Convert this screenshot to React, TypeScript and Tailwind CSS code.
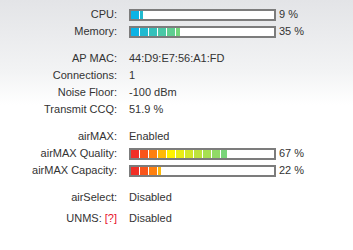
import React from "react";

type Stop = [number, string];

const BAR_INNER = 143;

const hexToRgb = (h: string) => [
  parseInt(h.slice(1, 3), 16),
  parseInt(h.slice(3, 5), 16),
  parseInt(h.slice(5, 7), 16),
];

const colorAt = (stops: Stop[], t: number) => {
  for (let i = 0; i < stops.length - 1; i++) {
    const [a, ca] = stops[i];
    const [b, cb] = stops[i + 1];
    if (t <= b || i === stops.length - 2) {
      const k = Math.max(0, Math.min(1, (t - a) / (b - a)));
      const x = hexToRgb(ca);
      const y = hexToRgb(cb);
      const c = x.map((v, j) => Math.round(v + (y[j] - v) * k));
      return `rgb(${c[0]},${c[1]},${c[2]})`;
    }
  }
  return stops[0][1];
};

const blueStops: Stop[] = [
  [0, "#02b0ee"],
  [0.35, "#76d67a"],
  [1, "#d8ec30"],
];

const heatStops: Stop[] = [
  [0, "#ee1c2c"],
  [0.14, "#ff7410"],
  [0.28, "#fff200"],
  [0.67, "#76d47e"],
  [1, "#40c090"],
];

const Bar = ({ fill, stops, pct }: { fill: number; stops: Stop[]; pct: string }) => {
  const segs = [];
  for (let x = 0; x < fill; x += 9) {
    const w = Math.min(8, fill - x);
    segs.push(
      <div
        key={x}
        className="h-full shrink-0"
        style={{ width: w, background: colorAt(stops, (x + 4) / BAR_INNER) }}
      />
    );
  }
  return (
    <div className="flex items-center">
      <div className="w-[147px] h-[12px] border-2 border-[#7c7c7c] bg-white flex gap-[1px]">
        {segs}
      </div>
      <span className="ml-[3px]">{pct}</span>
    </div>
  );
};

const Row = ({ label, children }: { label: React.ReactNode; children: React.ReactNode }) => (
  <div className="flex h-[17px] items-center">
    <div className="w-[117px] text-right shrink-0">{label}</div>
    <div className="pl-[12px]">{children}</div>
  </div>
);

const App = () => {
  return (
    <div
      className="w-[353px] h-[250px] bg-[linear-gradient(to_bottom,#e3e4e7_0px,#f2f3f4_70px,#ffffff_105px)] pt-[6px] text-[11px] text-[#333333] leading-[17px]"
      style={{ fontFamily: '"Liberation Sans", Arial, sans-serif' }}
    >
      <Row label="CPU:">
        <Bar fill={12} stops={blueStops} pct="9 %" />
      </Row>
      <Row label="Memory:">
        <Bar fill={49} stops={blueStops} pct="35 %" />
      </Row>

      <div className="h-[10px]" />
      <Row label="AP MAC:">44:D9:E7:56:A1:FD</Row>
      <Row label="Connections:">1</Row>
      <Row label="Noise Floor:">-100 dBm</Row>
      <Row label="Transmit CCQ:">51.9 %</Row>

      <div className="h-[10px]" />
      <Row label="airMAX:">Enabled</Row>
      <Row label="airMAX Quality:">
        <Bar fill={96} stops={heatStops} pct="67 %" />
      </Row>
      <Row label="airMAX Capacity:">
        <Bar fill={30} stops={heatStops} pct="22 %" />
      </Row>

      <div className="h-[10px]" />
      <Row label="airSelect:">Disabled</Row>
      <div className="h-[4px]" />
      <Row
        label={
          <>
            UNMS: <span className="text-[#e8102c]">[?]</span>
          </>
        }
      >
        Disabled
      </Row>
    </div>
  );
};

export default App;
